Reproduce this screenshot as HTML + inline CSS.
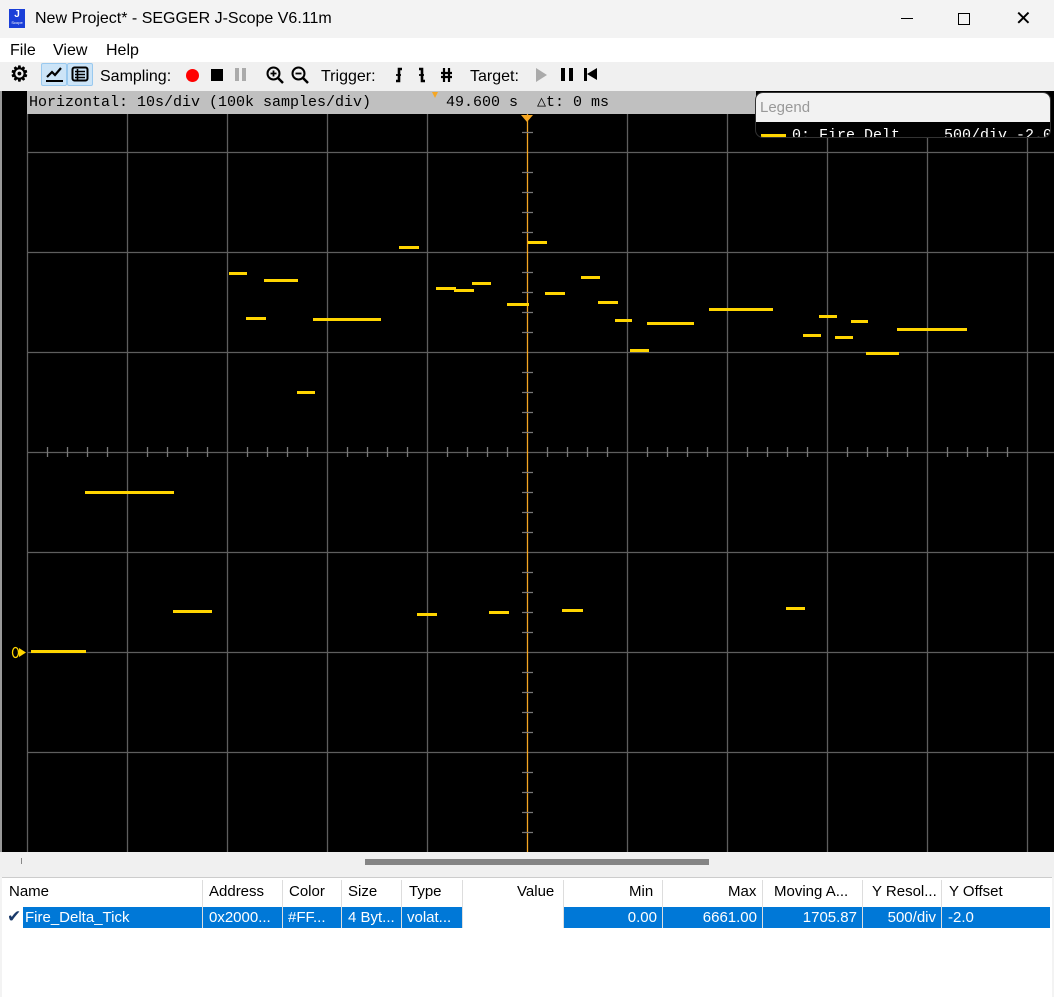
<!DOCTYPE html>
<html><head><meta charset="utf-8"><style>
*{box-sizing:border-box;margin:0;padding:0}
body{width:1054px;height:997px;overflow:hidden;background:#f3f3f3;font-family:"Liberation Sans",sans-serif;position:relative;font-size:15px;color:#000}
.abs{position:absolute}
.mono{font-family:"Liberation Mono",monospace}
.tb{position:absolute;top:64px;height:26px;line-height:26px;font-size:15px}
.seg{position:absolute;height:3px;background:#ffd500}
.th{position:absolute;top:883px;font-size:15px}
.td{position:absolute;top:907px;height:21px;line-height:21px;font-size:15px;color:#fff;background:#0078d7}
</style></head><body>
<div class="abs" style="left:0;top:0;width:1054px;height:38px;background:#f3f3f3"></div>
<div class="abs" style="left:9px;top:9px;width:16px;height:19px;background:#1a3fd8;color:#fff;font-size:10px;font-weight:bold;text-align:center;line-height:11px">J<div style="font-size:4px;line-height:6px;font-weight:normal">Scope</div></div>
<div class="abs" style="left:35px;top:10px;font-size:16px">New Project* - SEGGER J-Scope V6.11m</div>
<div class="abs" style="left:901px;top:18px;width:12px;height:1px;background:#000"></div>
<div class="abs" style="left:958px;top:13px;width:12px;height:12px;border:1px solid #000"></div>
<div class="abs" style="left:1015px;top:6px;font-size:20px;font-weight:300">✕</div>
<div class="abs" style="left:0;top:38px;width:1054px;height:24px;background:#fff"></div>
<div class="abs" style="left:10px;top:42px;font-size:16px">File</div>
<div class="abs" style="left:53px;top:42px;font-size:16px">View</div>
<div class="abs" style="left:106px;top:42px;font-size:16px">Help</div>
<div class="abs" style="left:0;top:62px;width:1054px;height:29px;background:#f0f0f0"></div>
<div class="abs" style="left:10px;top:62px;font-size:21px;font-weight:bold;line-height:26px">⚙</div>
<div class="abs" style="left:41px;top:63px;width:26px;height:23px;background:#cce4f7;border:1px solid #99c9ef;border-radius:2px"></div>
<div class="abs" style="left:67px;top:63px;width:26px;height:23px;background:#cce4f7;border:1px solid #99c9ef;border-radius:2px"></div>
<svg class="abs" style="left:45px;top:66px" width="20" height="17"><path d="M2 11 L7 6 L10 9 L16 2" stroke="#000" stroke-width="2.2" fill="none"/><path d="M1 15 H18" stroke="#000" stroke-width="2"/></svg>
<svg class="abs" style="left:71px;top:66px" width="18" height="17"><rect x="1.5" y="1.5" width="15" height="13" rx="2" stroke="#000" stroke-width="2" fill="none"/><path d="M4 5.5H14M4 8.5H14M4 11.5H14M6.5 3V14" stroke="#000" stroke-width="1.6"/></svg>
<div class="tb" style="left:100px;font-size:16px">Sampling:</div>
<div class="abs" style="left:186px;top:69px;width:13px;height:13px;border-radius:50%;background:#f00"></div>
<div class="abs" style="left:211px;top:69px;width:12px;height:12px;background:#000"></div>
<div class="abs" style="left:235px;top:68px;width:4px;height:13px;background:#aaa"></div>
<div class="abs" style="left:242px;top:68px;width:4px;height:13px;background:#aaa"></div>
<svg class="abs" style="left:266px;top:66px" width="18" height="18"><circle cx="7.5" cy="7.5" r="6" stroke="#000" stroke-width="2" fill="none"/><path d="M12 12L17 17" stroke="#000" stroke-width="2.5"/><path d="M4.5 7.5H10.5M7.5 4.5V10.5" stroke="#000" stroke-width="1.8"/></svg>
<svg class="abs" style="left:291px;top:66px" width="18" height="18"><circle cx="7.5" cy="7.5" r="6" stroke="#000" stroke-width="2" fill="none"/><path d="M12 12L17 17" stroke="#000" stroke-width="2.5"/><path d="M4.5 7.5H10.5" stroke="#000" stroke-width="1.8"/></svg>
<div class="tb" style="left:321px;font-size:16px">Trigger:</div>
<svg class="abs" style="left:393px;top:67px" width="60" height="16"><path d="M3 14H6V2H9" stroke="#000" stroke-width="2.6" fill="none"/><path d="M26 2H29V14H32" stroke="#000" stroke-width="2.6" fill="none"/><path d="M26 8H31M3 8H8" stroke="#000" stroke-width="1.8"/><path d="M51 1V15M56 1V15M48 6H59M48 10H59" stroke="#000" stroke-width="2.2"/></svg>
<div class="tb" style="left:470px;font-size:16px">Target:</div>
<div class="abs" style="left:536px;top:68px;width:0;height:0;border-left:11px solid #aaa;border-top:7px solid transparent;border-bottom:7px solid transparent"></div>
<div class="abs" style="left:561px;top:68px;width:4px;height:13px;background:#000"></div>
<div class="abs" style="left:569px;top:68px;width:4px;height:13px;background:#000"></div>
<div class="abs" style="left:584px;top:68px;width:3px;height:13px;background:#000"></div>
<div class="abs" style="left:587px;top:68px;width:0;height:0;border-right:10px solid #000;border-top:6.5px solid transparent;border-bottom:6.5px solid transparent"></div>
<div class="abs" style="left:0;top:91px;width:1054px;height:761px;background:#000;border-left:2px solid #9a9a9a"></div>
<svg class="abs" style="left:0;top:91px" width="1054" height="761">
<g stroke="#5e5e5e" stroke-width="1.3">
<path d="M27.5 23V761M127.5 23V761M227.5 23V761M327.5 23V761M427.5 23V761M627.5 23V761M727.5 23V761M827.5 23V761M927.5 23V761M1027.5 23V761"/>
<path d="M27 61.5H1054M27 161.5H1054M27 261.5H1054M27 361.5H1054M27 461.5H1054M27 561.5H1054M27 661.5H1054"/>
</g>
<path d="M527.5 23V761" stroke="#f5a623" stroke-width="1.3"/>
<path d="M521 24H533L527 31Z" fill="#f5a623"/>
</svg>
<svg class="abs" style="left:0;top:91px" width="1054" height="761"><g stroke="#777" stroke-width="1.3">
<path d="M47.5 356V366M67.5 356V366M87.5 356V366M107.5 356V366M147.5 356V366M167.5 356V366M187.5 356V366M207.5 356V366M247.5 356V366M267.5 356V366M287.5 356V366M307.5 356V366M347.5 356V366M367.5 356V366M387.5 356V366M407.5 356V366M447.5 356V366M467.5 356V366M487.5 356V366M507.5 356V366M547.5 356V366M567.5 356V366M587.5 356V366M607.5 356V366M647.5 356V366M667.5 356V366M687.5 356V366M707.5 356V366M747.5 356V366M767.5 356V366M787.5 356V366M807.5 356V366M847.5 356V366M867.5 356V366M887.5 356V366M907.5 356V366M947.5 356V366M967.5 356V366M987.5 356V366M1007.5 356V366"/>
<path d="M522 41.5H533M522 81.5H533M522 101.5H533M522 121.5H533M522 141.5H533M522 181.5H533M522 201.5H533M522 221.5H533M522 241.5H533M522 281.5H533M522 301.5H533M522 321.5H533M522 341.5H533M522 381.5H533M522 401.5H533M522 421.5H533M522 441.5H533M522 481.5H533M522 501.5H533M522 521.5H533M522 541.5H533M522 581.5H533M522 601.5H533M522 621.5H533M522 641.5H533M522 681.5H533M522 701.5H533M522 721.5H533M522 741.5H533"/>
</g>
<ellipse cx="15.5" cy="561.5" rx="3" ry="5" stroke="#ffd500" stroke-width="1.3" fill="none"/>
<path d="M19 557L26 561.5L19 566Z" fill="#ffd500"/>
</svg>
<div class="abs mono" style="left:27px;top:91px;width:729px;height:23px;background:#c0c0c0;font-size:15px;line-height:23px;padding-left:2px">Horizontal: 10s/div (100k samples/div)<span style="position:absolute;left:419px">49.600 s</span><span style="position:absolute;left:510px">△t: 0 ms</span></div>
<div class="abs" style="left:432px;top:92px;width:0;height:0;border-left:3px solid transparent;border-right:3px solid transparent;border-top:6px solid #f5a623"></div>
<div class="abs" style="left:755px;top:92px;width:296px;height:46px;border:1px solid #333;border-radius:8px;overflow:hidden;background:#000">
<div style="height:29px;background:#f2f2f2;color:#999;padding-left:4px;line-height:30px;font-size:15px">Legend</div>
<div style="position:absolute;left:5px;top:41px;width:25px;height:3px;background:#ffd500"></div>
<div class="mono" style="position:absolute;left:36px;top:34px;color:#fff;font-size:15px;white-space:nowrap">0: Fire_Delt<span style="position:absolute;left:152px">500/div -2.0</span></div>
</div>
<div class="seg" style="left:229px;top:272px;width:18px"></div>
<div class="seg" style="left:264px;top:279px;width:34px"></div>
<div class="seg" style="left:246px;top:317px;width:20px"></div>
<div class="seg" style="left:313px;top:318px;width:68px"></div>
<div class="seg" style="left:297px;top:391px;width:18px"></div>
<div class="seg" style="left:399px;top:246px;width:20px"></div>
<div class="seg" style="left:436px;top:287px;width:20px"></div>
<div class="seg" style="left:454px;top:289px;width:20px"></div>
<div class="seg" style="left:472px;top:282px;width:19px"></div>
<div class="seg" style="left:507px;top:303px;width:22px"></div>
<div class="seg" style="left:528px;top:241px;width:19px"></div>
<div class="seg" style="left:545px;top:292px;width:20px"></div>
<div class="seg" style="left:581px;top:276px;width:19px"></div>
<div class="seg" style="left:598px;top:301px;width:20px"></div>
<div class="seg" style="left:615px;top:319px;width:17px"></div>
<div class="seg" style="left:630px;top:349px;width:19px"></div>
<div class="seg" style="left:647px;top:322px;width:47px"></div>
<div class="seg" style="left:709px;top:308px;width:64px"></div>
<div class="seg" style="left:803px;top:334px;width:18px"></div>
<div class="seg" style="left:819px;top:315px;width:18px"></div>
<div class="seg" style="left:835px;top:336px;width:18px"></div>
<div class="seg" style="left:851px;top:320px;width:17px"></div>
<div class="seg" style="left:866px;top:352px;width:33px"></div>
<div class="seg" style="left:897px;top:328px;width:70px"></div>
<div class="seg" style="left:85px;top:491px;width:89px"></div>
<div class="seg" style="left:173px;top:610px;width:39px"></div>
<div class="seg" style="left:417px;top:613px;width:20px"></div>
<div class="seg" style="left:489px;top:611px;width:20px"></div>
<div class="seg" style="left:562px;top:609px;width:21px"></div>
<div class="seg" style="left:786px;top:607px;width:19px"></div>
<div class="seg" style="left:31px;top:650px;width:55px"></div>
<div class="abs" style="left:0;top:852px;width:1054px;height:25px;background:#f0f0f0"></div>
<div class="abs" style="left:21px;top:858px;width:1px;height:6px;background:#888"></div>
<div class="abs" style="left:365px;top:859px;width:344px;height:6px;background:#858585"></div>
<div class="abs" style="left:2px;top:877px;width:1050px;height:120px;background:#fff;border-top:1px solid #ccc"></div>
<div class="th" style="left:9px">Name</div>
<div class="th" style="left:209px">Address</div>
<div class="th" style="left:289px">Color</div>
<div class="th" style="left:348px">Size</div>
<div class="th" style="left:409px">Type</div>
<div class="th" style="left:517px">Value</div>
<div class="th" style="left:629px">Min</div>
<div class="th" style="left:728px">Max</div>
<div class="th" style="left:774px">Moving A...</div>
<div class="th" style="left:872px">Y Resol...</div>
<div class="th" style="left:949px">Y Offset</div>
<div class="abs" style="left:202px;top:880px;width:1px;height:48px;background:#ddd"></div>
<div class="abs" style="left:282px;top:880px;width:1px;height:48px;background:#ddd"></div>
<div class="abs" style="left:341px;top:880px;width:1px;height:48px;background:#ddd"></div>
<div class="abs" style="left:401px;top:880px;width:1px;height:48px;background:#ddd"></div>
<div class="abs" style="left:462px;top:880px;width:1px;height:48px;background:#ddd"></div>
<div class="abs" style="left:563px;top:880px;width:1px;height:48px;background:#ddd"></div>
<div class="abs" style="left:662px;top:880px;width:1px;height:48px;background:#ddd"></div>
<div class="abs" style="left:762px;top:880px;width:1px;height:48px;background:#ddd"></div>
<div class="abs" style="left:862px;top:880px;width:1px;height:48px;background:#ddd"></div>
<div class="abs" style="left:941px;top:880px;width:1px;height:48px;background:#ddd"></div>
<div class="abs" style="left:7px;top:907px;font-size:17px;color:#1a3a6a">✔</div>
<div class="td" style="left:23px;width:179px;padding-left:2px">Fire_Delta_Tick</div>
<div class="td" style="left:203px;width:79px;padding-left:6px">0x2000...</div>
<div class="td" style="left:283px;width:58px;padding-left:5px">#FF...</div>
<div class="td" style="left:342px;width:59px;padding-left:6px">4 Byt...</div>
<div class="td" style="left:402px;width:60px;padding-left:5px">volat...</div>
<div class="td" style="left:564px;width:98px;text-align:right;padding-right:5px">0.00</div>
<div class="td" style="left:663px;width:99px;text-align:right;padding-right:5px">6661.00</div>
<div class="td" style="left:763px;width:99px;text-align:right;padding-right:5px">1705.87</div>
<div class="td" style="left:863px;width:78px;text-align:right;padding-right:5px">500/div</div>
<div class="td" style="left:942px;width:108px;padding-left:6px">-2.0</div>
</body></html>
